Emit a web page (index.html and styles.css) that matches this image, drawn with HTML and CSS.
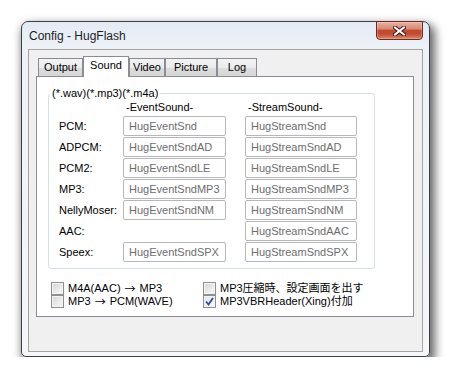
FILE: index.html
```html
<!DOCTYPE html>
<html lang="ja">
<head>
  <meta charset="UTF-8" />
  <title>Config - HugFlash</title>
  <link rel="stylesheet" href="styles.css">
</head>
<body>
  <div class="window">
    <div class="titlebar">
      <span class="title">Config - HugFlash</span>
      <button class="close" aria-label="Close">
        <svg width="13" height="10" viewBox="0 0 13 10">
          <path d="M2 1.5 L11 8.5 M11 1.5 L2 8.5" stroke="#3a1712" stroke-width="4" stroke-linecap="square" fill="none"/>
          <path d="M2 1.5 L11 8.5 M11 1.5 L2 8.5" stroke="#fff" stroke-width="2" stroke-linecap="square" fill="none"/>
        </svg>
      </button>
    </div>

    <div class="client">
      <div class="tabs">
        <div class="tab t-output">Output</div>
        <div class="tab t-sound active">Sound</div>
        <div class="tab t-video">Video</div>
        <div class="tab t-picture">Picture</div>
        <div class="tab t-log">Log</div>
      </div>

      <div class="panel">
        <fieldset class="group">
          <legend>(*.wav)(*.mp3)(*.m4a)</legend>
          <div class="codecs">
            <span></span>
            <span class="head">-EventSound-</span>
            <span class="head">-StreamSound-</span>

            <span class="label">PCM:</span>
            <input class="field event" value="HugEventSnd" readonly>
            <input class="field stream" value="HugStreamSnd" readonly>

            <span class="label">ADPCM:</span>
            <input class="field event" value="HugEventSndAD" readonly>
            <input class="field stream" value="HugStreamSndAD" readonly>

            <span class="label">PCM2:</span>
            <input class="field event" value="HugEventSndLE" readonly>
            <input class="field stream" value="HugStreamSndLE" readonly>

            <span class="label">MP3:</span>
            <input class="field event" value="HugEventSndMP3" readonly>
            <input class="field stream" value="HugStreamSndMP3" readonly>

            <span class="label">NellyMoser:</span>
            <input class="field event" value="HugEventSndNM" readonly>
            <input class="field stream" value="HugStreamSndNM" readonly>

            <span class="label">AAC:</span>
            <span></span>
            <input class="field stream" value="HugStreamSndAAC" readonly>

            <span class="label">Speex:</span>
            <input class="field event" value="HugEventSndSPX" readonly>
            <input class="field stream" value="HugStreamSndSPX" readonly>
          </div>
        </fieldset>

        <div class="options">
          <label class="check"><span class="box"></span>M4A(AAC)<span class="arrow">→</span>MP3</label>
          <label class="check"><span class="box"></span>MP3圧縮時、設定画面を出す</label>
          <label class="check"><span class="box"></span>MP3<span class="arrow">→</span>PCM(WAVE)</label>
          <label class="check">
            <span class="box checked">
              <svg width="9" height="9" viewBox="0 0 9 9">
                <path d="M1 4.5 L3.5 7.5 L8 1" stroke="#2a4f9c" stroke-width="1.8" fill="none"/>
              </svg>
            </span>MP3VBRHeader(Xing)付加</label>
        </div>
      </div>
    </div>
  </div>
</body>
</html>
```

FILE: styles.css
```css
:root {
  --frame-edge: #3c3f44;
  --tab-border: #898c95;
  --field-border: #b5b7bb;
  --field-text: #6d6d6d;
  --group-border: #d5dfe5;
}

* {
  box-sizing: border-box;
  font-family: 'Liberation Sans', 'Noto Sans CJK JP', sans-serif;
}

body {
  margin: 0;
  padding: 21px 0 0 21px;
  background: #fff;
}

.window {
  width: 409px;
  height: 336px;
  display: flex;
  flex-direction: column;
  padding: 0 6px 4px 6px;
  border: 1px solid var(--frame-edge);
  border-radius: 7px 7px 5px 5px;
  background: linear-gradient(180deg, #e4ebf4 0, #eef2f8 28px, #f4f6fa 100%);
  box-shadow: 3px 5px 10px 2px rgba(0, 0, 0, 0.6);
}

.titlebar {
  height: 27px;
  display: flex;
  justify-content: space-between;
  align-items: flex-start;
}

.title {
  align-self: center;
  padding-left: 1px;
  font-size: 12px;
  color: #1e1e1e;
}

.close {
  width: 47px;
  height: 19px;
  margin-top: -1px;
  padding: 0;
  display: flex;
  align-items: center;
  justify-content: center;
  border: 1px solid #6b2a20;
  border-radius: 0 0 4px 4px;
  background: linear-gradient(180deg, #eab0a2 0%, #d98a75 40%, #c4492f 50%, #c24a31 70%, #dc8668 100%);
  box-shadow: inset 0 0 0 1px rgba(255, 255, 255, 0.25);
}

.client {
  flex: 1;
  display: flex;
  flex-direction: column;
  padding: 6px 8px 0 7px;
  background: #f0f0f0;
  border: 1px solid #a3a3a3;
}

/* tab strip */
.tabs {
  display: flex;
  align-items: flex-end;
  height: 20px;
  padding-left: 2px;
}

.tab {
  height: 18px;
  border: 1px solid var(--tab-border);
  border-bottom: none;
  background: linear-gradient(180deg, #f3f3f3 0%, #ebebeb 50%, #dddddd 51%, #d6d6d6 100%);
  font-size: 11px;
  line-height: 17px;
  text-align: center;
  color: #000;
}

.t-output { width: 45px; }
.t-sound { width: 46px; }
.t-video { width: 36px; }
.t-picture { width: 52px; }
.t-log { width: 40px; }

.tab.active {
  position: relative;
  z-index: 1;
  height: 21px;
  margin-bottom: -1px;
  background: #fff;
}

.panel {
  height: 241px;
  padding: 10px 0 0 11px;
  background: #fff;
  border: 1px solid var(--tab-border);
}

/* group box */
.group {
  width: 327px;
  margin: 0;
  padding: 0 0 6px 0;
  border: 1px solid var(--group-border);
  border-radius: 3px;
}

.group legend {
  margin-left: 1px;
  padding: 0 2px;
  font-size: 11px;
  line-height: 13px;
  color: #000;
}

.codecs {
  display: grid;
  grid-template-columns: 64px 122px 112px;
  grid-template-rows: 15px repeat(7, 20px);
  row-gap: 1px;
  padding-left: 10px;
}

.head {
  padding-left: 3px;
  font-size: 11px;
  line-height: 14px;
  color: #000;
}

.label {
  align-self: center;
  font-size: 11px;
  color: #000;
}

.field {
  height: 20px;
  margin: 0;
  padding: 0 0 0 5px;
  border: 1px solid var(--field-border);
  border-radius: 2px;
  background: #fff;
  font-size: 11px;
  color: var(--field-text);
  outline: none;
}

.field.event { width: 103px; }
.field.stream { width: 112px; }

/* checkboxes */
.options {
  display: grid;
  grid-template-columns: 152px 180px;
  grid-auto-rows: 13px;
  margin-top: 13px;
  padding-left: 3px;
}

.check {
  display: flex;
  align-items: center;
  gap: 4px;
  font-size: 11px;
  line-height: 13px;
  color: #000;
  white-space: nowrap;
}

.arrow {
  font-family: 'Noto Sans CJK JP', sans-serif;
}

.box {
  width: 13px;
  height: 13px;
  flex: none;
  display: flex;
  align-items: center;
  justify-content: center;
  border: 1px solid #8f8f8f;
  background: linear-gradient(135deg, #d4d4d4 0%, #ececec 60%, #f8f8f8 100%);
  box-shadow: inset 0 0 0 1px #f4f4f4;
}

.box.checked {
  background: linear-gradient(135deg, #dfe6f0 0%, #f2f5f9 70%, #fbfcfd 100%);
}
```
